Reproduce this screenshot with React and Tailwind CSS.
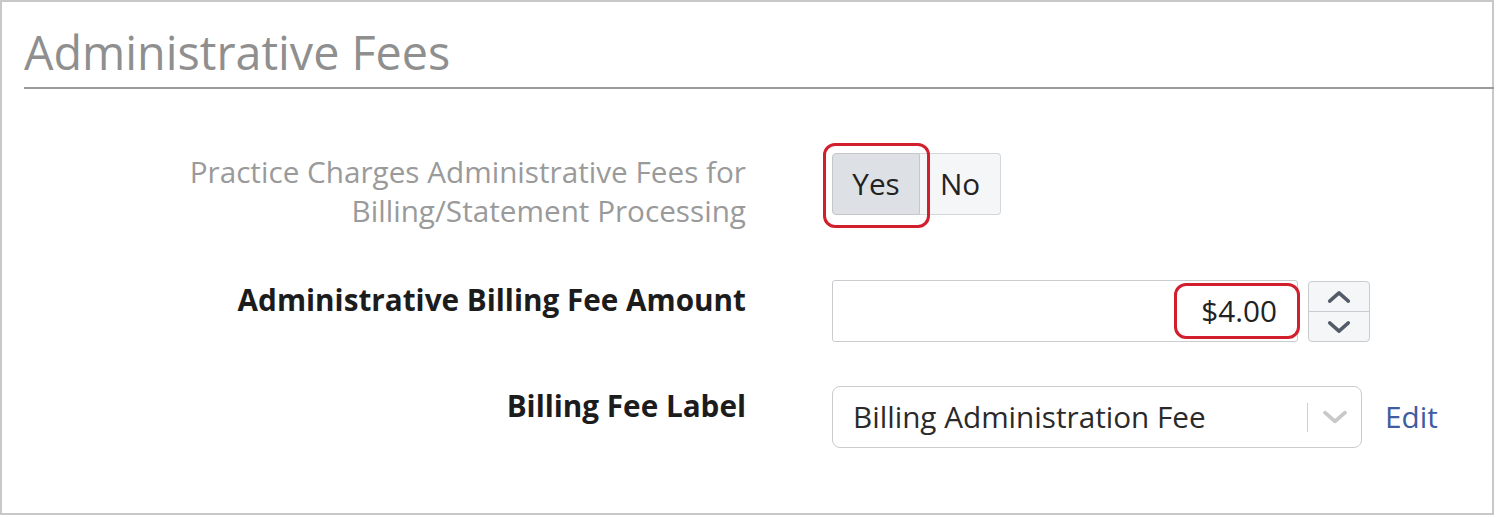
import React from "react";

function ChevronUp({ className }) {
  return (
    <svg viewBox="0 0 24 24" className={className} fill="none" stroke="currentColor" strokeWidth="3" strokeLinecap="round" strokeLinejoin="round">
      <path d="M4 15.5l8-7 8 7" />
    </svg>
  );
}
function ChevronDown({ className }) {
  return (
    <svg viewBox="0 0 24 24" className={className} fill="none" stroke="currentColor" strokeWidth="3" strokeLinecap="round" strokeLinejoin="round">
      <path d="M4 8.5l8 7 8-7" />
    </svg>
  );
}

export default function App() {
  return (
    <div className="bg-white w-[1496px] h-[517px]" style={{ fontFamily: '"Open Sans", sans-serif' }}>
      <div className="w-[1494px] h-[515px] border-2 border-[#c8c8c8] bg-white flex flex-col">
        <div className="pl-[22px]">
          <h1 className="text-[46.7px] leading-[52px] text-[#8f8f8f] font-normal pt-[24px] pb-[9px]">
            Administrative Fees
          </h1>
          <div className="h-[2px] bg-[#9a9a9a] -mr-[2px]" />
        </div>

        <div className="flex flex-col pl-[22px] pt-[63px]">
          {/* Row 1 */}
          <div className="flex items-start">
            <div className="w-[722px] text-right text-[29.7px] leading-[39px] text-[#9a9a9a]">
              Practice Charges Administrative Fees for
              <br />
              Billing/Statement Processing
            </div>
            <div className="ml-[86px] mt-[1px] relative flex">
              <button className="w-[88px] h-[62px] bg-[#dde0e5] border border-[#c4c8cd] rounded-l-[4px] text-[29.7px] text-[#222]">
                Yes
              </button>
              <button className="w-[81px] h-[62px] bg-[#f5f6f7] border border-l-0 border-[#d4d6d9] rounded-r-[4px] text-[29.7px] text-[#222]">
                No
              </button>
              <div className="absolute left-[-9px] top-[-10px] w-[107px] h-[85px] border-[3px] border-[#d21f2e] rounded-[12px] pointer-events-none" />
            </div>
          </div>

          {/* Row 2 */}
          <div className="flex items-start mt-[50px]">
            <div className="w-[722px] text-right text-[29.7px] leading-[39px] font-bold text-[#1c1c1c]">
              Administrative Billing Fee Amount
            </div>
            <div className="ml-[86px] flex items-start">
              <div className="relative w-[466px] h-[62px] border border-[#c9cbce] rounded-[3px] flex items-center justify-end pr-[20px] text-[29.7px] text-[#222]">
                $4.00
                <div className="absolute right-[-3px] top-[2px] w-[126px] h-[56px] border-[3px] border-[#d21f2e] rounded-[12px] pointer-events-none" />
              </div>
              <div className="ml-[10px] mt-[1px] w-[62px] h-[61px] border border-[#c9cbce] rounded-[4px] bg-[#f5f6f7] flex flex-col">
                <div className="flex-1 flex items-center justify-center border-b border-[#c9cbce] text-[#525b68]">
                  <ChevronUp className="w-[28px] h-[28px]" />
                </div>
                <div className="flex-1 flex items-center justify-center text-[#525b68]">
                  <ChevronDown className="w-[28px] h-[28px]" />
                </div>
              </div>
            </div>
          </div>

          {/* Row 3 */}
          <div className="flex items-start mt-[44px]">
            <div className="w-[722px] text-right text-[29.7px] leading-[39px] font-bold text-[#1c1c1c]">
              Billing Fee Label
            </div>
            <div className="ml-[86px] flex items-center">
              <div className="w-[530px] h-[62px] border border-[#c9cbce] rounded-[8px] flex items-center">
                <span className="flex-1 pl-[20px] text-[29.7px] text-[#2a2a2a]">Billing Administration Fee</span>
                <div className="w-[1px] h-[29px] bg-[#cfcfcf]" />
                <div className="w-[53px] flex items-center justify-center text-[#c8c8c8]">
                  <ChevronDown className="w-[30px] h-[30px]" />
                </div>
              </div>
              <a className="ml-[23px] text-[29.7px] text-[#3e5c9f]">Edit</a>
            </div>
          </div>
        </div>
      </div>
    </div>
  );
}
